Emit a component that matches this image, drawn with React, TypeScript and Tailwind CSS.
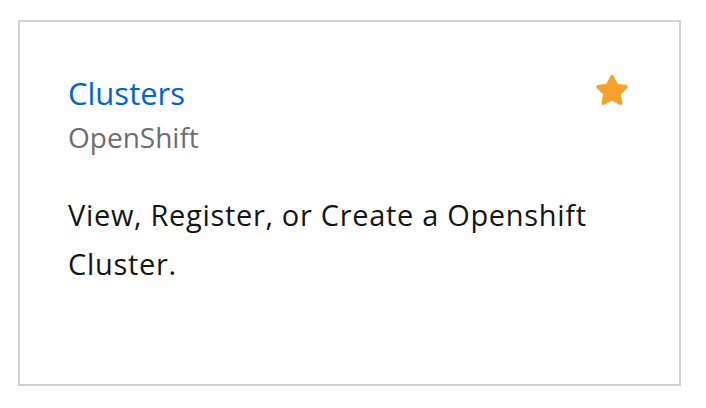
function StarIcon() {
  return (
    <svg viewBox="0 0 576 512" className="h-[30px] w-[34px] fill-[#f5a12b]" aria-hidden="true">
      <path d="M259.3 17.8L194 150.2 47.9 171.5c-26.2 3.8-36.7 36.1-17.7 54.6l105.7 103-25 145.5c-4.5 26.3 23.2 46 46.4 33.7L288 439.6l130.7 68.7c23.2 12.2 50.9-7.4 46.4-33.7l-25-145.5 105.7-103c19-18.5 8.5-50.8-17.7-54.6L382 150.2 316.7 17.8c-11.7-23.6-45.6-23.9-57.4 0z" />
    </svg>
  );
}

export default function App() {
  return (
    <div className="min-h-screen bg-white pl-[18px] pt-[20px] font-['Open_Sans',sans-serif]">
      <div className="flex h-[366px] w-[663px] flex-col border-2 border-[#d2d2d2] px-12 pt-[48px]">
        <div className="flex items-start justify-between">
          <div className="flex flex-col">
            <a href="#" className="text-[31px] leading-[46px] text-[#0066cc]">
              Clusters
            </a>
            <span className="text-[28px] leading-[42px] text-[#6a6e73]">OpenShift</span>
          </div>
          <button className="mr-[2px] mt-[5px]" aria-label="Favorite">
            <StarIcon />
          </button>
        </div>
        <p className="mt-[32px] max-w-[540px] text-[29px] leading-[49px] tracking-[0.68px] text-[#151515]">
          View, Register, or Create a Openshift Cluster.
        </p>
      </div>
    </div>
  );
}
